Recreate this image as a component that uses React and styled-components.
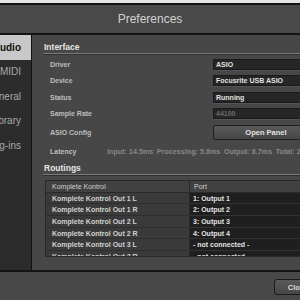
import React from "react";
import styled, { createGlobalStyle } from "styled-components";

const GlobalStyle = createGlobalStyle`
  html, body {
    margin: 0;
    padding: 0;
    background: #e4e4e4;
  }
  body {
    font-family: "Liberation Sans", Arial, sans-serif;
  }
  #root {
    width: 300px;
    height: 300px;
    overflow: hidden;
  }
`;

const navItems = ["Audio", "MIDI", "General", "Library", "Plug-ins"];

const fields = [
  { label: "Driver", value: "ASIO" },
  { label: "Device", value: "Focusrite USB ASIO" },
  { label: "Status", value: "Running" },
  { label: "Sample Rate", value: "44100", disabled: true },
];

const latency = [
  "Input: 14.5ms",
  "Processing: 5.8ms",
  "Output: 8.7ms",
  "Total: 29.0ms",
];

const routings = [
  ["Komplete Kontrol Out 1 L", "1: Output 1"],
  ["Komplete Kontrol Out 1 R", "2: Output 2"],
  ["Komplete Kontrol Out 2 L", "3: Output 3"],
  ["Komplete Kontrol Out 2 R", "4: Output 4"],
  ["Komplete Kontrol Out 3 L", "- not connected -"],
  ["Komplete Kontrol Out 3 R", "- not connected -"],
];

function App() {
  return (
    <Screen>
      <GlobalStyle />
      <Frame>
        <TitleBar>Preferences</TitleBar>
        <Main>
          <Sidebar>
            {navItems.map((item, i) => (
              <NavItem key={item} $selected={i === 0}>
                {item}
              </NavItem>
            ))}
          </Sidebar>
          <Content>
            <SectionTitle>Interface</SectionTitle>
            <Rows>
              {fields.map((f) => (
                <Row key={f.label}>
                  <Label>{f.label}</Label>
                  <Field $disabled={f.disabled}>{f.value}</Field>
                </Row>
              ))}
              <Row $tall>
                <Label>ASIO Config</Label>
                <PanelButton>Open Panel</PanelButton>
              </Row>
              <LatencyRow>
                <LatencyLabel>Latency</LatencyLabel>
                {latency.map((l) => (
                  <LatencyValue key={l}>{l}</LatencyValue>
                ))}
              </LatencyRow>
            </Rows>
            <SectionTitle $gap>Routings</SectionTitle>
            <Table>
              <HeaderCell>Komplete Kontrol</HeaderCell>
              <HeaderCell $port>Port</HeaderCell>
              {routings.map(([name, port]) => (
                <React.Fragment key={name}>
                  <NameCell>{name}</NameCell>
                  <PortCell>{port}</PortCell>
                </React.Fragment>
              ))}
            </Table>
          </Content>
        </Main>
        <Footer>
          <CloseButton>Close</CloseButton>
        </Footer>
      </Frame>
    </Screen>
  );
}

const Screen = styled.div`
  width: 300px;
  height: 300px;
  padding-top: 3px;
  box-sizing: border-box;
  background: #e4e4e4;
`;
const Frame = styled.div`
  height: 297px;
  border-top: 2px solid #121212;
  background: #484848;
  box-sizing: border-box;
  overflow: hidden;
`;
const TitleBar = styled.div`
  height: 28px;
  display: flex;
  align-items: center;
  justify-content: center;
  font-size: 12px;
  color: #d2d2d2;
  background: #494949;
  border-bottom: 2px solid #141414;
`;
const Main = styled.div`
  display: flex;
  height: 235px;
  border-bottom: 2px solid #141414;
`;
const Sidebar = styled.div`
  width: 31px;
  flex-shrink: 0;
  background: #2c2c2c;
  border-right: 1px solid #111;
`;
const NavItem = styled.div`
  height: 24.5px;
  display: flex;
  align-items: center;
  justify-content: flex-end;
  padding-right: 10px;
  font-size: 10px;
  white-space: nowrap;
  color: ${(p) => (p.$selected ? "#111" : "#a8a8a8")};
  font-weight: ${(p) => (p.$selected ? 700 : 400)};
  background: ${(p) => (p.$selected ? "#c8c8c8" : "transparent")};
`;
const Content = styled.div`
  flex: 1;
  min-width: 0;
  overflow: hidden;
  padding: 7px 0 0 12px;
  background: #474747;
`;
const SectionTitle = styled.div`
  margin: ${(p) => (p.$gap ? "2px" : "0")} 0 0 -1px;
  padding: 0 0 1px 1px;
  font-size: 8.5px;
  font-weight: 700;
  line-height: 10px;
  color: #e6e6e6;
  border-bottom: 1px solid #7a7a7a;
  box-shadow: 0 1px 0 #2f2f2f;
`;
const Rows = styled.div`
  margin-top: 2px;
  padding-left: 6px;
`;
const Row = styled.div`
  display: grid;
  grid-template-columns: 163px 106px;
  align-items: center;
  height: ${(p) => (p.$tall ? "20px" : "16.5px")};
`;
const Label = styled.div`
  font-size: 7px;
  font-weight: 700;
  color: #bdbdbd;
  white-space: nowrap;
`;
const Field = styled.div`
  height: 11px;
  box-sizing: border-box;
  display: flex;
  align-items: center;
  padding-left: 2px;
  background: #262626;
  border: 1px solid #1a1a1a;
  box-shadow: 0 1px 0 #555;
  font-size: 7px;
  font-weight: 700;
  white-space: nowrap;
  color: ${(p) => (p.$disabled ? "#6a6a6a" : "#e2e2e2")};
`;
const PanelButton = styled.div`
  height: 15px;
  box-sizing: border-box;
  display: flex;
  align-items: center;
  justify-content: center;
  background: linear-gradient(#595959, #464646);
  border: 1px solid #1e1e1e;
  border-radius: 2px;
  font-size: 7.5px;
  font-weight: 700;
  color: #e2e2e2;
`;
const LatencyRow = styled.div`
  display: flex;
  align-items: center;
  height: 19px;
  white-space: nowrap;
`;
const LatencyLabel = styled(Label)`
  width: 57px;
  flex-shrink: 0;
`;
const LatencyValue = styled.span`
  margin-right: 3.5px;
  font-size: 7.2px;
  font-weight: 700;
  color: #878787;
`;
const Table = styled.div`
  margin: 5px 0 0 1px;
  width: 300px;
  height: 77px;
  overflow: hidden;
  display: grid;
  grid-template-columns: 143px 1fr;
  grid-auto-rows: 11.7px;
  border: 1px solid #2a2a2a;
  box-sizing: border-box;
  background: #303030;
  font-size: 7px;
  white-space: nowrap;
`;
const HeaderCell = styled.div`
  display: flex;
  align-items: center;
  padding-left: ${(p) => (p.$port ? "4px" : "6px")};
  background: #414141;
  color: #cfcfcf;
  border-bottom: 1px solid #2a2a2a;
  border-left: ${(p) => (p.$port ? "1px solid #2a2a2a" : "none")};
`;
const NameCell = styled.div`
  display: flex;
  align-items: center;
  padding-left: 6px;
  background: #3a3a3a;
  border-bottom: 1px solid #2e2e2e;
  color: #d2d2d2;
  font-weight: 700;
`;
const PortCell = styled.div`
  display: flex;
  align-items: center;
  padding-left: 3px;
  background: #1f1f1f;
  border-bottom: 1px solid #333;
  border-left: 1px solid #2a2a2a;
  color: #e2e2e2;
  font-weight: 700;
`;
const Footer = styled.div`
  padding: 7px 0 0 274px;
`;
const CloseButton = styled.div`
  width: 48px;
  height: 16px;
  box-sizing: border-box;
  display: flex;
  align-items: center;
  justify-content: center;
  background: linear-gradient(#5a5a5a, #464646);
  border: 1px solid #1a1a1a;
  border-radius: 3px;
  font-size: 7.5px;
  font-weight: 700;
  color: #dcdcdc;
`;

export default App;
